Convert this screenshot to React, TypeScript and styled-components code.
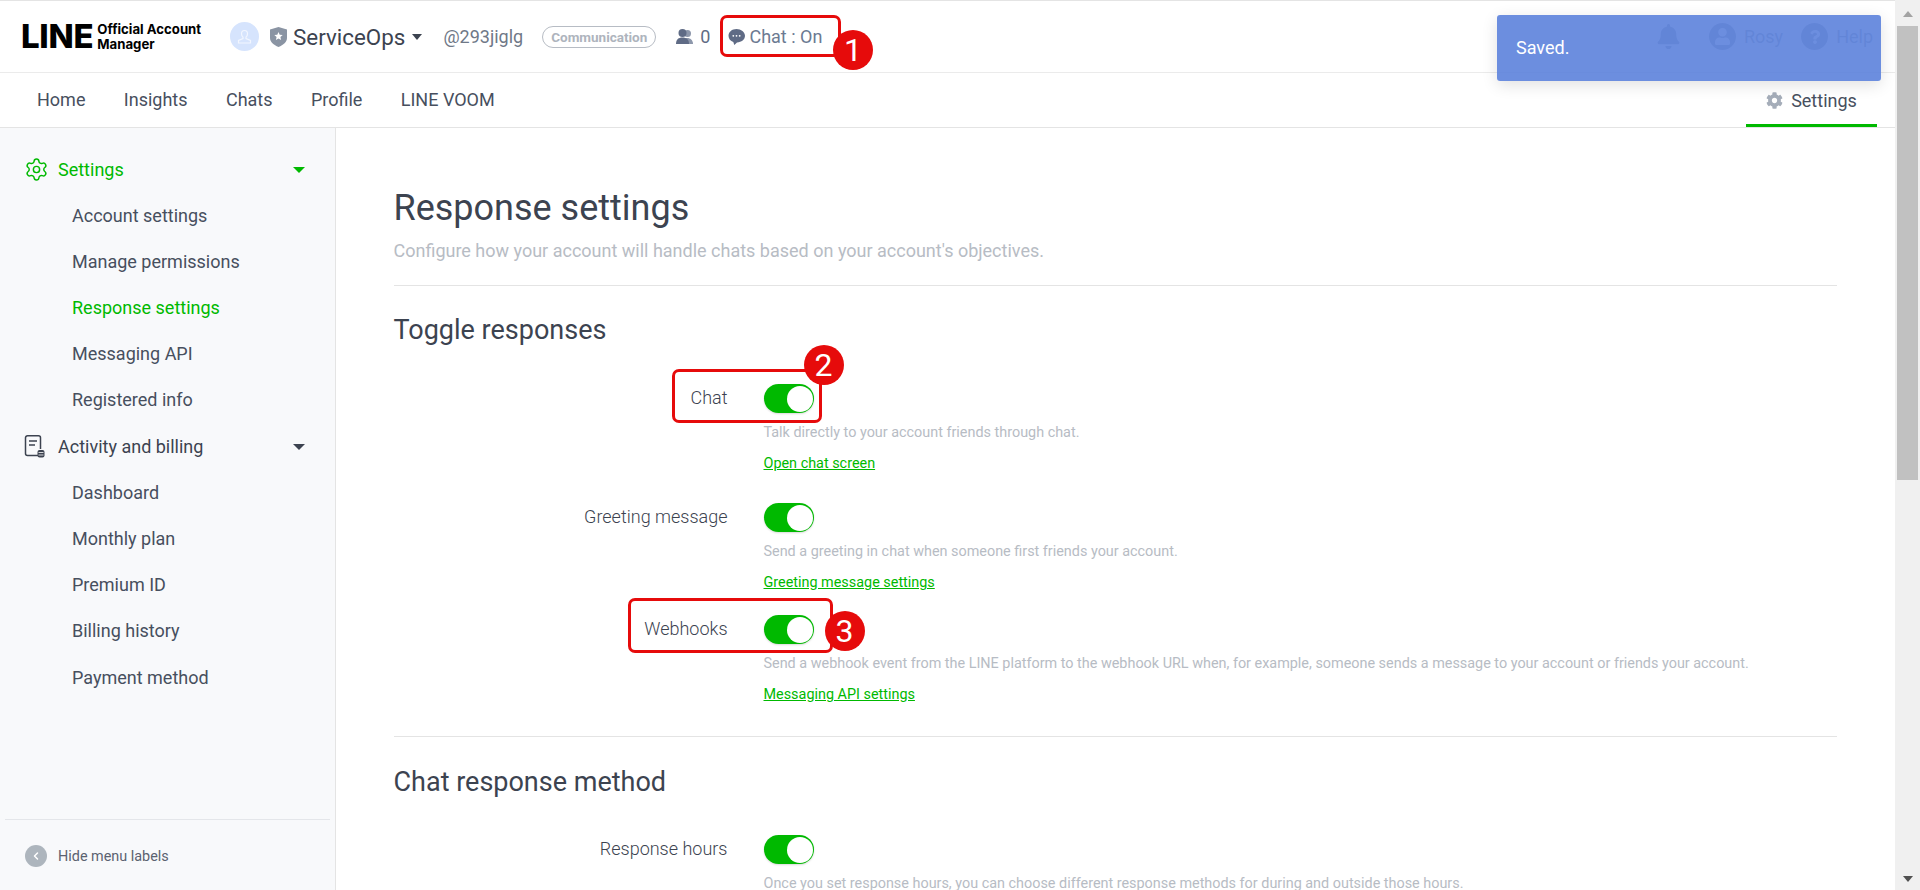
import React from 'react'
import styled, { createGlobalStyle } from 'styled-components'
import { Settings as GearOutline, ChevronLeft } from 'lucide-react'
import { FaBell, FaCog, FaQuestion, FaUser } from 'react-icons/fa'

const GlobalStyle = createGlobalStyle`
    html, body {
        margin: 0;
        padding: 0;
        height: 890px;
        overflow: hidden;
        background: #fff;
        font-family: Roboto, "Liberation Sans", sans-serif;
        color: #474f5e;
    }
    * { box-sizing: border-box; }
`

const sidebarGroups = [
    { title: 'Settings', active: true, items: ['Account settings', 'Manage permissions', 'Response settings', 'Messaging API', 'Registered info'] },
    { title: 'Activity and billing', active: false, items: ['Dashboard', 'Monthly plan', 'Premium ID', 'Billing history', 'Payment method'] },
]

const ChatBubble = () => (
    <svg width="17" height="18" viewBox="0 0 17 18">
        <path d="M8.5 1C4 1 .5 3.9.5 7.8c0 3 2 5.300 4.800 6.200l1 3 2.700-2.600c4.500 0 8-2.800 8-6.600S13 1 8.500 1z" fill="#5f6b85" />
        <circle cx="5.300" cy="7.800" r=".9" fill="#fff" />
        <circle cx="8.500" cy="7.800" r=".9" fill="#fff" />
        <circle cx="11.700" cy="7.800" r=".9" fill="#fff" />
    </svg>
)

const Shield = () => (
    <svg width="17" height="20" viewBox="0 0 17 20">
        <path d="M8.500 0L17 2.500V11c0 4-3.600 7-8.500 9C3.600 18 0 15 0 11V2.500z" fill="#8a94a3" />
        <path d="M8.500 5l1.200 2.800 3 .3-2.300 2 .7 3-2.600-1.600-2.600 1.600.7-3-2.300-2 3-.3z" fill="#fff" />
    </svg>
)

const AvatarGlyph = () => (
    <svg width="15" height="16" viewBox="0 0 15 16" fill="none" stroke="#f2f6ff" strokeWidth="1.200">
        <path d="M7.500 1.500c-2 0-3 1.500-3 3.300 0 1.500.6 2.600 1.500 3.300v1.500L1.500 11.500v2.500h12v-2.500L9 9.600V8.100c.9-.7 1.500-1.800 1.500-3.300 0-1.800-1-3.300-3-3.300z" />
    </svg>
)

const Friends = () => (
    <svg width="17" height="15" viewBox="0 0 17 15">
        <circle cx="11.500" cy="4.500" r="3.500" fill="#8d97ab" />
        <path d="M7 15c0-4 2-6 4.500-6S17 11 17 15z" fill="#8d97ab" />
        <circle cx="6.500" cy="4" r="4" fill="#5f6b85" />
        <path d="M0 15c0-4.500 2.500-6.500 6.500-6.500S13 10.500 13 15z" fill="#5f6b85" />
    </svg>
)

const BillingGlyph = () => (
    <svg width="21" height="23" viewBox="0 0 21 23" fill="none" stroke="#3c4350" strokeWidth="1.500">
        <path d="M15 20.500H3.500a2 2 0 0 1-2-2V2.800a2 2 0 0 1 2-2h11a2 2 0 0 1 2 2V14" />
        <path d="M5 6h8M5 10h6" />
        <rect x="13.500" y="15" width="7" height="7.500" rx="2" fill="#3c4350" stroke="none" />
        <path d="M14.500 17.500h5M14.500 20h5" stroke="#fff" strokeWidth=".8" />
    </svg>
)

const Toggle = () => (
    <Switch>
        <Knob />
    </Switch>
)

export default function App() {
    return (
        <Shell>
            <GlobalStyle />
            <Page>
                <Header>
                    <Logo>
                        <LogoWord>LINE</LogoWord>
                        <LogoSub>Official Account<br />Manager</LogoSub>
                    </Logo>
                    <Avatar><AvatarGlyph /></Avatar>
                    <ShieldBox><Shield /></ShieldBox>
                    <AccountName>ServiceOps</AccountName>
                    <HeaderCaret />
                    <AccountId>@293jiglg</AccountId>
                    <Pill>Communication</Pill>
                    <FriendCount><Friends /> 0</FriendCount>
                    <ChatStatus><ChatBubble /> Chat : On</ChatStatus>
                    <HeaderRight>
                        <BellBox><FaBell size={25} /></BellBox>
                        <RoundIcon><FaUser size={17} /></RoundIcon>
                        <HeaderLink>Rosy</HeaderLink>
                        <RoundIcon><FaQuestion size={14} /></RoundIcon>
                        <HeaderLink>Help</HeaderLink>
                    </HeaderRight>
                    <CalloutBox $left={720} $top={14} $width={121} $height={42} />
                    <Badge $left={833} $top={29}>1</Badge>
                </Header>
                <Nav>
                    <NavItem>Home</NavItem>
                    <NavItem>Insights</NavItem>
                    <NavItem>Chats</NavItem>
                    <NavItem>Profile</NavItem>
                    <NavItem>LINE VOOM</NavItem>
                    <SettingsTab><FaCog size={17} color="#a5adb9" /> Settings</SettingsTab>
                </Nav>
                <Body>
                    <Sidebar>
                        {sidebarGroups.map((group) => (
                            <React.Fragment key={group.title}>
                                <GroupRow $active={group.active}>
                                    <GroupIcon>
                                        {group.active ? <GearOutline size={25} strokeWidth={1.4} /> : <BillingGlyph />}
                                    </GroupIcon>
                                    {group.title}
                                    <GroupCaret />
                                </GroupRow>
                                {group.items.map((item) => (
                                    <SubItem key={item} $active={item === 'Response settings'}>{item}</SubItem>
                                ))}
                            </React.Fragment>
                        ))}
                        <SidebarFooter>
                            <CollapseButton><ChevronLeft size={12} strokeWidth={3} color="#fff" /></CollapseButton>
                            Hide menu labels
                        </SidebarFooter>
                    </Sidebar>
                    <Main>
                        <Title>Response settings</Title>
                        <Subtitle>Configure how your account will handle chats based on your account's objectives.</Subtitle>
                        <Divider $above={22} />
                        <SectionTitle $above={27}>Toggle responses</SectionTitle>
                        <Row $above={37}>
                            <RowLabel>Chat</RowLabel>
                            <Toggle />
                            <Description>Talk directly to your account friends through chat.</Description>
                            <RowLink>Open chat screen</RowLink>
                            <CalloutBox $left={278} $top={-15} $width={150} $height={54} />
                            <Badge $left={410} $top={-39}>2</Badge>
                        </Row>
                        <Row $above={29}>
                            <RowLabel>Greeting message</RowLabel>
                            <Toggle />
                            <Description>Send a greeting in chat when someone first friends your account.</Description>
                            <RowLink>Greeting message settings</RowLink>
                        </Row>
                        <Row $above={22}>
                            <RowLabel>Webhooks</RowLabel>
                            <Toggle />
                            <Description>Send a webhook event from the LINE platform to the webhook URL when, for example, someone sends a message to your account or friends your account.</Description>
                            <RowLink>Messaging API settings</RowLink>
                            <CalloutBox $left={234} $top={-17} $width={205} $height={55} />
                            <Badge $left={431} $top={-4}>3</Badge>
                        </Row>
                        <Divider $above={31} />
                        <SectionTitle $above={28}>Chat response method</SectionTitle>
                        <Row $above={36}>
                            <RowLabel>Response hours</RowLabel>
                            <Toggle />
                            <Description>Once you set response hours, you can choose different response methods for during and outside those hours.</Description>
                        </Row>
                    </Main>
                </Body>
            </Page>
            <ScrollTrack>
                <ScrollArrow $up />
                <ScrollThumb />
                <ScrollArrow />
            </ScrollTrack>
            <Toast>Saved.</Toast>
        </Shell>
    )
}

const Shell = styled.div`
    position: relative;
    display: flex;
    width: 1920px;
    height: 890px;
    overflow: hidden;
`

const Page = styled.div`
    flex: 1;
    min-width: 0;
    display: flex;
    flex-direction: column;
`

const Header = styled.header`
    position: relative;
    flex: none;
    height: 73px;
    display: flex;
    align-items: center;
    padding-left: 21px;
    border-top: 1px solid #e4e4e4;
    border-bottom: 1px solid #ebebeb;
`

const Logo = styled.div`
    display: flex;
    align-items: center;
    width: 209px;
    color: #000;
`

const LogoWord = styled.span`
    font-family: Inter, sans-serif;
    font-weight: 800;
    font-size: 33px;
    line-height: 1;
    letter-spacing: -0.3px;
`

const LogoSub = styled.span`
    margin-left: 4px;
    font-family: Inter, sans-serif;
    font-weight: 700;
    font-size: 13.2px;
    line-height: 15px;
`

const Avatar = styled.div`
    flex: none;
    width: 29px;
    height: 29px;
    border-radius: 50%;
    background: #d6e4fd;
    display: flex;
    align-items: center;
    justify-content: center;
`

const ShieldBox = styled.div`
    display: flex;
    margin-left: 11px;
`

const AccountName = styled.span`
    margin-left: 6px;
    font-size: 22.4px;
    color: #3c4350;
`

const HeaderCaret = styled.span`
    margin-left: 7px;
    border-left: 5.5px solid transparent;
    border-right: 5.5px solid transparent;
    border-top: 6px solid #3c4350;
`

const AccountId = styled.span`
    margin-left: 21px;
    font-size: 18px;
    color: #6f7887;
`

const Pill = styled.span`
    margin-left: 19px;
    height: 22px;
    padding: 0 8px;
    border: 1px solid #b7bcc4;
    border-radius: 11px;
    font-size: 13.5px;
    font-weight: 700;
    line-height: 20px;
    color: #aeb4bd;
`

const FriendCount = styled.span`
    margin-left: 20px;
    display: flex;
    align-items: center;
    gap: 7px;
    font-size: 18px;
    color: #5f6b85;
`

const ChatStatus = styled.span`
    margin-left: 18px;
    display: flex;
    align-items: center;
    gap: 4px;
    font-size: 18px;
    color: #6c7a92;
`

const HeaderRight = styled.div`
    margin-left: auto;
    padding-right: 22px;
    display: flex;
    align-items: center;
    color: #adb5bd;
`

const BellBox = styled.span`
    display: flex;
    margin-right: 28px;
`

const RoundIcon = styled.span`
    width: 27px;
    height: 27px;
    border-radius: 50%;
    background: #adb5bd;
    color: #fff;
    display: flex;
    align-items: center;
    justify-content: center;
`

const HeaderLink = styled.span`
    margin: 0 18px 0 8px;
    font-size: 18px;
    &:last-child {
        margin-right: 0;
    }
`

const CalloutBox = styled.div<{ $left: number; $top: number; $width: number; $height: number }>`
    position: absolute;
    left: ${(p) => p.$left}px;
    top: ${(p) => p.$top}px;
    width: ${(p) => p.$width}px;
    height: ${(p) => p.$height}px;
    border: 3px solid #e60b0b;
    border-radius: 7px;
    pointer-events: none;
`

const Badge = styled.div<{ $left: number; $top: number }>`
    position: absolute;
    left: ${(p) => p.$left}px;
    top: ${(p) => p.$top}px;
    width: 40px;
    height: 40px;
    border-radius: 50%;
    background: #e60b0b;
    color: #fff;
    font-size: 32px;
    line-height: 40px;
    text-align: center;
`

const Nav = styled.nav`
    flex: none;
    height: 55px;
    display: flex;
    align-items: center;
    gap: 38.4px;
    padding: 0 18px 0 37px;
    border-bottom: 1px solid #e4e4e4;
    font-size: 18px;
`

const NavItem = styled.span`
    line-height: 54px;
`

const SettingsTab = styled.span`
    margin-left: auto;
    width: 131px;
    height: 54px;
    display: flex;
    align-items: center;
    justify-content: center;
    gap: 8px;
    border-bottom: 3px solid #00b900;
    padding-top: 3px;
`

const Body = styled.div`
    flex: 1;
    min-height: 0;
    display: flex;
`

const Sidebar = styled.aside`
    flex: none;
    width: 336px;
    display: flex;
    flex-direction: column;
    padding-top: 18.5px;
    background: #f8f9fb;
    border-right: 1px solid #e4e4e4;
`

const GroupRow = styled.div<{ $active: boolean }>`
    height: 46.2px;
    display: flex;
    align-items: center;
    padding: 0 30px 0 24px;
    font-size: 18px;
    color: ${(p) => (p.$active ? '#00b900' : '#3c4350')};
`

const GroupIcon = styled.span`
    width: 34px;
    display: flex;
`

const GroupCaret = styled.span`
    margin-left: auto;
    border-left: 6px solid transparent;
    border-right: 6px solid transparent;
    border-top: 6px solid currentColor;
`

const SubItem = styled.div<{ $active: boolean }>`
    height: 46.2px;
    line-height: 46.2px;
    padding-left: 72px;
    font-size: 18px;
    color: ${(p) => (p.$active ? '#00b900' : '#474f5e')};
`

const SidebarFooter = styled.div`
    margin: auto 5px 0;
    height: 71px;
    display: flex;
    align-items: center;
    gap: 11px;
    padding: 2px 0 0 20px;
    border-top: 1px solid #e4e6ea;
    font-size: 14.4px;
    color: #5b6270;
`

const CollapseButton = styled.span`
    width: 22px;
    height: 22px;
    border-radius: 50%;
    background: #adb5bd;
    display: flex;
    align-items: center;
    justify-content: center;
`

const Main = styled.main`
    flex: 1;
    min-width: 0;
    padding: 58px 58px 0 57.5px;
`

const Title = styled.h1`
    margin: 0;
    font-size: 36px;
    font-weight: 400;
    line-height: 44px;
    color: #3c4350;
`

const Subtitle = styled.p`
    margin: 9px 0 0;
    font-size: 18px;
    line-height: 24px;
    color: #b7bcc4;
`

const Divider = styled.hr<{ $above: number }>`
    margin: ${(p) => p.$above}px 0 0;
    height: 1px;
    border: 0;
    background: #e4e4e4;
`

const SectionTitle = styled.h2<{ $above: number }>`
    margin: ${(p) => p.$above}px 0 0;
    font-size: 27px;
    font-weight: 400;
    line-height: 34px;
    color: #3c4350;
`

const Row = styled.div<{ $above: number }>`
    position: relative;
    margin-top: ${(p) => p.$above}px;
    display: grid;
    grid-template-columns: 334px 36px 1fr;
`

const RowLabel = styled.div`
    text-align: right;
    font-size: 18px;
    font-weight: 300;
    line-height: 27px;
    color: #3c4350;
`

const Switch = styled.div`
    grid-column: 3;
    width: 50px;
    height: 29px;
    border-radius: 15px;
    background: #00b900;
    padding: 1.500px 1px;
    display: flex;
    justify-content: flex-end;
    box-shadow: 0 1px 2px rgba(0, 0, 0, 0.15);
`

const Knob = styled.div`
    width: 26px;
    height: 26px;
    border-radius: 50%;
    background: #fff;
`

const Description = styled.p`
    grid-column: 3;
    margin: 10px 0 0;
    font-size: 14.4px;
    line-height: 20px;
    color: #b7bcc4;
`

const RowLink = styled.a`
    grid-column: 3;
    margin-top: 11px;
    font-size: 14.4px;
    line-height: 20px;
    color: #00b900;
    text-decoration: underline;
`

const ScrollTrack = styled.div`
    flex: none;
    width: 25px;
    display: flex;
    flex-direction: column;
    align-items: center;
    background: #f0f0f0;
`

const ScrollArrow = styled.div<{ $up?: boolean }>`
    margin: ${(p) => (p.$up ? '11px 0 6px' : 'auto 0 8px')};
    border-left: 5.500px solid transparent;
    border-right: 5.500px solid transparent;
    ${(p) => (p.$up ? 'border-bottom: 6px solid #a3a3a3;' : 'border-top: 6px solid #505050;')}
`

const ScrollThumb = styled.div`
    width: 21px;
    height: 454px;
    margin-top: 3px;
    background: #c1c1c1;
`

const Toast = styled.div`
    position: absolute;
    left: 1497px;
    top: 15px;
    width: 384px;
    height: 66px;
    padding-left: 19px;
    border-radius: 3px;
    background: rgba(88, 126, 219, 0.88);
    box-shadow: 0 4px 16px rgba(0, 0, 0, 0.12);
    color: #fff;
    font-size: 18px;
    line-height: 66px;
`
